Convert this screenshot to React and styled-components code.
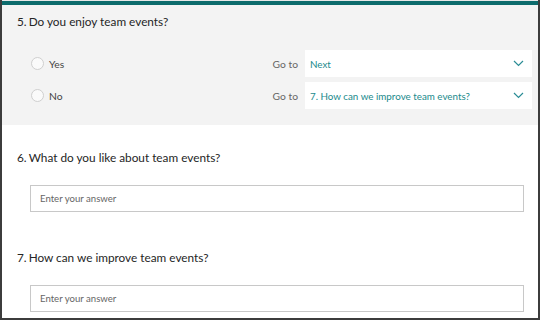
import React from 'react'
import styled, { createGlobalStyle } from 'styled-components'

const Global = createGlobalStyle`
  html, body { margin: 0; padding: 0; background: #fff; }
  * { box-sizing: border-box; }
`

const Frame = styled.div`
  width: 540px;
  height: 320px;
  border: 2px solid #3c3c3c;
  border-top: none;
  background: #fff;
  display: flex;
  flex-direction: column;
  overflow: hidden;
  font-family: "Segoe UI", Lato, "Open Sans", sans-serif;
  color: #333;
`

const TopBar = styled.div`
  height: 5px;
  border-top: 1px solid #e8e8e8;
  background: #0c6b6c;
  flex: none;
`

const Section = styled.section`
  background: ${p => (p.$active ? '#f3f3f3' : '#fff')};
  padding: ${p => (p.$active ? '8px 6px 16px 15px' : '24px 14px 13px 15px')};
  flex: none;
`

const Title = styled.h2`
  margin: 0;
  font-size: 11.8px;
  font-weight: 400;
  color: #252525;
  display: flex;
  gap: 2px;
  line-height: 18px;
`

const Options = styled.div`
  margin-top: 19px;
  display: flex;
  flex-direction: column;
  gap: 5px;
`

const OptionRow = styled.div`
  display: grid;
  grid-template-columns: 1fr auto 227px;
  align-items: center;
  height: 27px;
`

const Choice = styled.label`
  display: flex;
  align-items: center;
  gap: 5px;
  padding-left: 14px;
  font-size: 10.3px;
  color: #444;
`

const Radio = styled.span`
  width: 13px;
  height: 13px;
  border-radius: 50%;
  border: 1px solid #cfcfcf;
  background: #fafafa;
`

const GoTo = styled.span`
  font-size: 10.3px;
  color: #666;
  margin-right: 7px;
`

const Select = styled.div`
  height: 27px;
  background: #fff;
  display: flex;
  align-items: center;
  justify-content: space-between;
  padding: 0 8px 0 5px;
  font-size: 9.8px;
  color: #1a8a8c;
`

const Answer = styled.div`
  margin: 18px 0 0 13px;
  height: 27px;
  border: 1px solid #c8c8c8;
  display: flex;
  align-items: center;
  padding-left: 9px;
  font-size: 9.6px;
  color: #666;
`

const Chevron = () => (
  <svg width="11" height="7" viewBox="0 0 11 7" fill="none">
    <path d="M1 1l4.5 4.5L10 1" stroke="#2a8c95" strokeWidth="1.2" />
  </svg>
)

const questions = [
  { num: '6.', text: 'What do you like about team events?' },
  { num: '7.', text: 'How can we improve team events?' },
]

export default function App() {
  return (
    <>
      <Global />
      <Frame>
        <TopBar />
        <Section $active>
          <Title><span>5.</span><span>Do you enjoy team events?</span></Title>
          <Options>
            <OptionRow>
              <Choice><Radio />Yes</Choice>
              <GoTo>Go to</GoTo>
              <Select>Next<Chevron /></Select>
            </OptionRow>
            <OptionRow>
              <Choice><Radio />No</Choice>
              <GoTo>Go to</GoTo>
              <Select>7. How can we improve team events?<Chevron /></Select>
            </OptionRow>
          </Options>
        </Section>
        {questions.map(q => (
          <Section key={q.num}>
            <Title><span>{q.num}</span><span>{q.text}</span></Title>
            <Answer>Enter your answer</Answer>
          </Section>
        ))}
      </Frame>
    </>
  )
}
